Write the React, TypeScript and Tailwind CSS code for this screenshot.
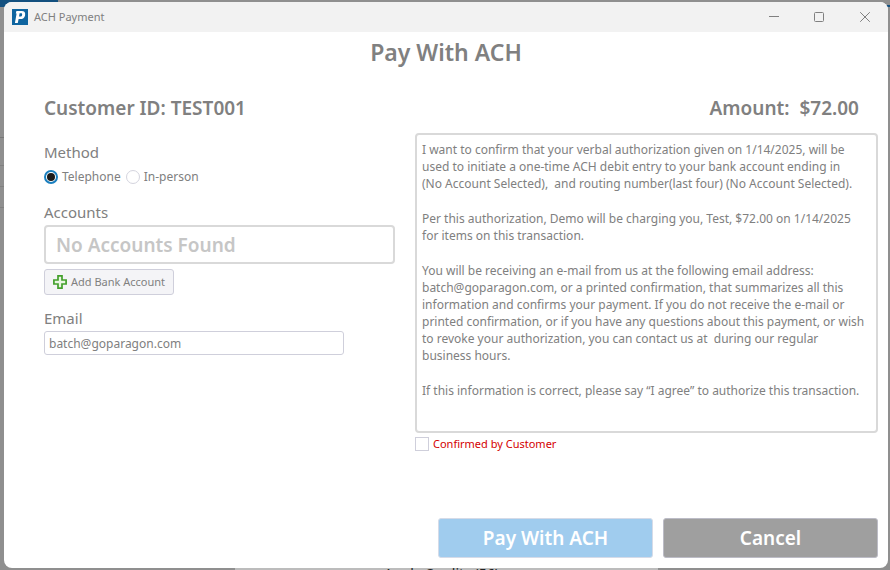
import { useState } from "react";

const authorization = [
  "I want to confirm that your verbal authorization given on 1/14/2025, will be used to initiate a one-time ACH debit entry to your bank account ending in (No\u00a0Account Selected),\u00a0 and routing number(last four) (No Account Selected).",
  "Per this authorization, Demo will be charging you, Test, $72.00 on 1/14/2025 for items on this transaction.",
  "You will be receiving an e-mail from us at the following email address: batch@goparagon.com, or a printed confirmation, that summarizes all this information and confirms your payment. If you do not receive the e-mail or printed confirmation, or if you have any questions about this payment, or wish to revoke your authorization, you can contact us at\u00a0 during our regular business hours.",
  "If this information is correct, please say “I agree” to authorize this transaction.",
];

const methods = ["Telephone", "In-person"];

function Logo() {
  return (
    <svg viewBox="0 0 16 16" className="size-4" aria-hidden="true">
      <rect width="16" height="16" fill="#0f65a0" />
      <path d="M4.4 2h5.2c2.9 0 4 1.6 3.5 4.2-.5 2.5-2.2 3.9-4.9 3.9H6.6L5.8 14H2.9l1.7-9.6h-.8z" fill="#fff" />
      <path d="M7.6 4.3h1.5c.9 0 1.2.6 1 1.6-.2 1.1-.8 1.7-1.7 1.7H7z" fill="#0f65a0" />
    </svg>
  );
}

function PlusIcon() {
  return (
    <svg viewBox="0 0 14 14" className="size-3.5" aria-hidden="true">
      <path d="M5 .9h4V5h4.1v4H9v4.1H5V9H.9V5H5z" fill="#e9f6e2" stroke="#43a02c" strokeWidth="1.7" />
    </svg>
  );
}

function WindowControls() {
  return (
    <div className="flex h-full text-[#808080]">
      <button aria-label="Minimize" className="flex w-[45px] items-center justify-center">
        <svg viewBox="0 0 10 10" className="size-2.5" fill="none" stroke="currentColor">
          <path d="M0 4.5h10" />
        </svg>
      </button>
      <button aria-label="Maximize" className="flex w-[46px] items-center justify-center">
        <svg viewBox="0 0 10 10" className="size-2.5" fill="none" stroke="currentColor">
          <rect x=".5" y=".5" width="9" height="9" rx="1" />
        </svg>
      </button>
      <button aria-label="Close" className="flex w-[46px] items-center justify-center">
        <svg viewBox="0 0 10 10" className="size-2.5" fill="none" stroke="currentColor">
          <path d="M.2.2l9.6 9.6M9.8.2L.2 9.8" />
        </svg>
      </button>
    </div>
  );
}

/** Dimmed edges of the main window that stay visible around the dialog. */
function Backdrop() {
  return (
    <div aria-hidden="true" className="absolute inset-0 overflow-hidden bg-[#8f8f8f]">
      <div className="absolute top-0 left-0 h-[7px] w-[58px] bg-[#13507f]" />
      <div className="absolute top-[5px] right-0 h-[2px] w-2 bg-[#13507f]" />
      <div className="absolute top-[137px] left-0 h-px w-1 bg-[#777777]" />
      <div className="absolute top-[165px] left-0 h-px w-1 bg-[#808080]" />
      <div className="absolute top-[186px] left-0 h-px w-1 bg-[#808080]" />
      <div className="absolute top-[207px] left-0 h-px w-1 bg-[#808080]" />
      <div className="absolute bottom-0 left-[235px] h-[2px] w-[423px] bg-[#bcbcbc]" />
      <p className="absolute top-[564px] left-[384px] text-sm leading-5 text-[#222222]">Apply Credits (56)</p>
    </div>
  );
}

export default function App() {
  const [method, setMethod] = useState("Telephone");
  const [email, setEmail] = useState("batch@goparagon.com");
  const [confirmed, setConfirmed] = useState(false);

  return (
    <div className="relative flex min-h-screen flex-col py-[2px] pr-[2px] pl-1 font-['Noto_Sans','Open_Sans',sans-serif] text-[#808080]">
      <Backdrop />
      <div role="dialog" aria-labelledby="title" className="relative flex flex-1 flex-col overflow-hidden rounded-lg bg-white">
        <header className="flex h-[30px] items-center bg-[#f2f2f2] pl-2">
          <Logo />
          <span className="ml-1.5 flex-1 text-[11px]">ACH Payment</span>
          <WindowControls />
        </header>

        <main className="flex flex-1 flex-col pt-1 pr-2.5 pb-2.5 pl-10">
          <h1 id="title" className="pr-[30px] text-center text-[23px] leading-8 font-semibold">
            Pay With ACH
          </h1>
          <div className="mt-[26px] flex justify-between pr-[19px] text-[19px] leading-7 font-semibold">
            <h2>Customer ID: TEST001</h2>
            <p>Amount:&nbsp; $72.00</p>
          </div>

          <div className="mt-[11px] grid grid-cols-[351fr_463fr] gap-5">
            <div className="pt-[7px]">
              <fieldset>
                <legend className="text-[15px] leading-6">Method</legend>
                <div className="mt-[3px] flex gap-[5px] text-xs leading-5">
                  {methods.map((name) => (
                    <label key={name} className="flex items-center gap-1">
                      <input
                        type="radio"
                        name="method"
                        checked={method === name}
                        onChange={() => setMethod(name)}
                        className="size-3.5 appearance-none rounded-full border border-[#d4d4de] bg-clip-content p-[2px] checked:border-2 checked:border-[#1a7fbf] checked:bg-[#1a1a1a] checked:p-px"
                      />
                      {name}
                    </label>
                  ))}
                </div>
              </fieldset>

              <label htmlFor="account" className="mt-[13px] block text-[15px] leading-6">
                Accounts
              </label>
              <input
                id="account"
                readOnly
                value="No Accounts Found"
                className="mt-px block h-[39px] w-full rounded border-2 border-[#d9d9d9] px-2.5 text-[19px] font-semibold text-[#c6c6c6] outline-none"
              />
              <button className="mt-[5px] flex h-[26px] items-center gap-1 rounded-[3px] border border-[#cfcfdb] bg-[#f4f4f7] pr-2 pl-2 text-[11px]">
                <PlusIcon />
                Add Bank Account
              </button>

              <label htmlFor="email" className="mt-[11px] block text-[15px] leading-6">
                Email
              </label>
              <input
                id="email"
                type="email"
                value={email}
                onChange={(e) => setEmail(e.target.value)}
                className="mt-px block h-6 w-[300px] rounded-[3px] border border-[#cfcfdb] px-1 text-xs outline-none"
              />
            </div>

            <div>
              <div className="flex min-h-[300px] flex-col gap-[18px] rounded border-2 border-[#d9d9d9] py-1.5 pr-[11px] pl-[5px] text-xs leading-[17px]">
                {authorization.map((text) => (
                  <p key={text}>{text}</p>
                ))}
              </div>
              <label className="mt-[2px] flex items-center gap-1 text-[11px] leading-[17px] text-[#d40000]">
                <input
                  type="checkbox"
                  checked={confirmed}
                  onChange={(e) => setConfirmed(e.target.checked)}
                  className="size-3.5 appearance-none border border-[#cfcfdb] bg-clip-content p-[2px] checked:bg-[#1a1a1a]"
                />
                Confirmed by Customer
              </label>
            </div>
          </div>

          <div className="mt-auto flex justify-end gap-2.5 pt-4 text-[19px] font-semibold text-white">
            <button className="h-10 w-[215px] rounded-[3px] border border-[#d5dbe8] bg-[#a0ccee]">Pay With ACH</button>
            <button className="h-10 w-[215px] rounded-[3px] border border-[#bcbcc6] bg-[#9f9f9f]">Cancel</button>
          </div>
        </main>
      </div>
    </div>
  );
}
